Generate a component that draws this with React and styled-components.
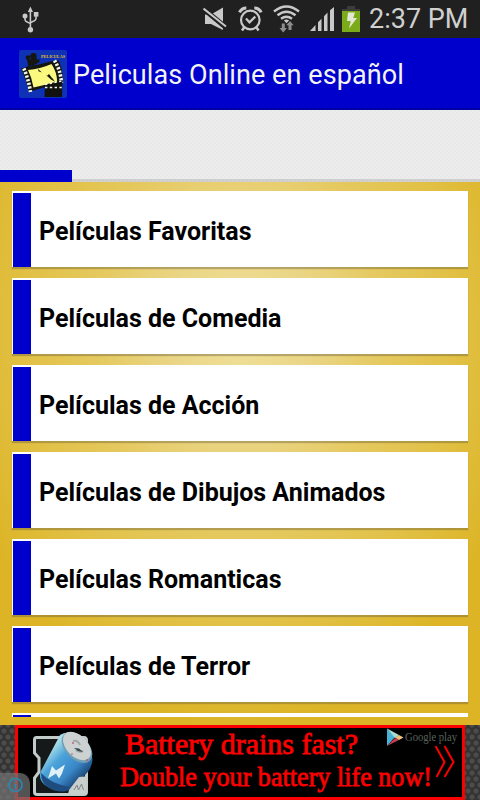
import React from "react";
import styled, { createGlobalStyle } from "styled-components";

const GlobalStyle = createGlobalStyle`
  * {
    box-sizing: border-box;
  }
  body {
    margin: 0;
    background: #000;
  }
`;

const Phone = styled.div`
  width: 480px;
  height: 800px;
  display: flex;
  flex-direction: column;
  overflow: hidden;
  font-family: Roboto, "Liberation Sans", sans-serif;
`;
const StatusBar = styled.div`
  flex: none;
  height: 38px;
  padding: 0 13px 0 22px;
  display: flex;
  align-items: center;
  justify-content: space-between;
  background: #202020;
`;
const StatusIcons = styled.div`
  display: flex;
  align-items: center;
`;
const StatusIcon = styled.svg`
  display: block;
  flex: none;
  margin-right: ${(props) => props.$gap || 0}px;
`;
const Clock = styled.span`
  width: 98px;
  font-size: 27px;
  line-height: 38px;
  color: #d0d0d0;
  white-space: nowrap;
`;
const ActionBar = styled.header`
  flex: none;
  height: 72px;
  padding-left: 19px;
  display: flex;
  align-items: center;
  background: #0000cc;
  border-bottom: 2px solid #0000a4;
`;
const AppIcon = styled.svg`
  display: block;
  flex: none;
  margin: 2px 6px 0 0;
  overflow: visible;
`;
const AppTitle = styled.h1`
  margin: 4px 0 0;
  font-size: 27px;
  font-weight: 400;
  letter-spacing: 0.08px;
  color: #f3f3f3;
  white-space: nowrap;
`;
const TabStrip = styled.div`
  flex: none;
  height: 72px;
  display: flex;
  align-items: flex-end;
  background: repeating-conic-gradient(#e8e8e8 0 25%, #ededed 0 50%) 0 0 / 4px
    4px;
`;
const TabIndicator = styled.div`
  width: 72px;
  height: 12px;
  background: #0000cc;
`;
const TabLine = styled.div`
  flex: 1;
  height: 3px;
  background: #cfcfcf;
`;
const List = styled.ul`
  flex: none;
  height: 543px;
  margin: 0;
  padding: 9px 12px 0;
  display: flex;
  flex-direction: column;
  gap: 11px;
  overflow: hidden;
  list-style: none;
  background: radial-gradient(
    ellipse 290px 400px at 240px 150px,
    #f0e09a 0%,
    #ead585 25%,
    #e5c95f 50%,
    #e1c044 75%,
    #dcb425 100%
  );
`;
const Card = styled.li`
  flex: none;
  height: ${(props) => (props.$last ? 4 : 76)}px;
  padding: 2px 0 0 1px;
  display: flex;
  overflow: hidden;
  background: #fff;
  box-shadow: ${(props) =>
    props.$last ? "none" : "0 2px 1px rgba(120, 105, 60, 0.45)"};
`;
const CardMark = styled.div`
  width: 18px;
  height: 74px;
  margin-right: 8px;
  background: #0000cc;
`;
const CardTitle = styled.span`
  font-size: 25px;
  font-weight: 700;
  line-height: 77px;
  color: #000;
  white-space: nowrap;
`;
const AdBar = styled.footer`
  position: relative;
  flex: none;
  height: 75px;
  padding: 0 15px 0 15px;
  background-color: #343434;
  background-image: radial-gradient(circle, #4c4c4c 2px, transparent 3px),
    radial-gradient(circle, #4c4c4c 2px, transparent 3px);
  background-size: 8px 12px;
  background-position: 0 0, 4px 6px;
`;
const Banner = styled.div`
  height: 75px;
  padding-left: 14px;
  display: flex;
  border: 3px solid #fb0000;
  background: #000;
`;
const AdCopy = styled.svg`
  display: block;
  flex: none;
  overflow: visible;
`;
const AdInfo = styled.div`
  position: absolute;
  left: 0;
  bottom: 0;
  width: 30px;
  height: 27px;
  border-top-right-radius: 10px;
  background: rgba(115, 115, 115, 0.72);
`;

const categories = [
  "Películas Favoritas",
  "Películas de Comedia",
  "Películas de Acción",
  "Películas de Dibujos Animados",
  "Películas Romanticas",
  "Películas de Terror",
];

const UsbIcon = () => (
  <StatusIcon width="17" height="27" viewBox="0 0 17 27">
    <g fill="none" stroke="#c9c9c9" strokeWidth="1.6">
      <path d="M8.4 5V24M3 9v4.5q0 1.5 2 2.4l3.4 1.7M14 8v4.5q0 1.5-2 2.4l-3.6 1.8" />
    </g>
    <g fill="#c9c9c9">
      <path d="M8.4 0.5 11 6H5.8z" />
      <circle cx="3" cy="10" r="2.5" />
      <path d="M11.8 6h4.6v4.6h-4.6z" />
      <circle cx="8.4" cy="23.8" r="2.7" />
    </g>
  </StatusIcon>
);

const MuteIcon = () => (
  <StatusIcon $gap={10} width="25" height="24" viewBox="0 0 25 24">
    <path d="M2 7.5h6l12-7V23L8 17H2z" fill="#c9c9c9" />
    <path d="M0 1.5 23 20.5" stroke="#202020" strokeWidth="5" />
    <path d="M.5 1.5 23 19.500" stroke="#c9c9c9" strokeWidth="2" />
  </StatusIcon>
);

const AlarmIcon = () => (
  <StatusIcon $gap={10} width="25" height="26" viewBox="0 0 25 26">
    <g fill="none" stroke="#c9c9c9">
      <circle cx="12.3" cy="14" r="9.3" strokeWidth="2.2" />
      <path
        d="M1.5 6.4Q3.7 2 8.3 2M16.3 2Q21 2 23.2 6.4"
        strokeWidth="3.2"
      />
      <path d="M8 12.5l3.5 3.8 5.8-5.7" strokeWidth="2.2" />
      <path d="M6.5 21 4 24.5M18 21l2.6 3.5" strokeWidth="2.5" />
    </g>
  </StatusIcon>
);

const WifiIcon = () => (
  <StatusIcon $gap={10} width="27" height="28" viewBox="0 0 27 28">
    <g fill="none" stroke="#c9c9c9" strokeWidth="2.4">
      <path d="M1 6.5Q13.5-3.5 26 6.5M4.5 10.3Q13.5 3.2 22.5 10.3M8 13.8Q13.5 9.6 19 13.8" />
    </g>
    <path d="M10.8 15.3q2.7-1.8 5.4 0l-2.7 3z" fill="#c9c9c9" />
    <path
      d="M8.8 18.5h3V23H14l-3.8 4.5L6.500 23h2.300zM15.500 25v-4.700h-2.200L17 16l3.600 4.300h-2.100V25z"
      fill="#8d8d8d"
    />
  </StatusIcon>
);

const SignalIcon = () => (
  <StatusIcon $gap={8} width="24" height="24" viewBox="0 0 24 24">
    <path
      d="M0 24 5.5 18v6zM8 15.2l3.5-3.5V24H8zM14 9.2l3.5-3.7V24H14zM20 3.3 24 0v24h-4z"
      fill="#c9c9c9"
    />
  </StatusIcon>
);

const BatteryIcon = () => (
  <StatusIcon $gap={9} width="18" height="26" viewBox="0 0 18 26">
    <path d="M5 0h8v3h5v2H0V3h5z" fill="#3c3c3c" />
    <path d="M0 5h18v21H0z" fill="#7cab19" />
    <path d="M6 6.5h7L11.2 12H15L7 22.5 8.8 15H5z" fill="#e2e8d5" />
  </StatusIcon>
);

const MovieIcon = () => (
  <AppIcon width="48" height="48" viewBox="0 0 48 48">
    <rect width="48" height="48" rx="2" fill="#0e31b5" />
    <g fill="#15160f">
      <circle cx="14.5" cy="6.2" r="3.2" />
      <circle cx="9" cy="7.6" r="2.3" />
      <path d="m8 9.5 10-1 .5 1.500 2-1.500v4.500l-2-.8-.5 2-9 1zM12 14h2.500l4.500 4.500h-2L13 15.500 6 19H4z" />
    </g>
    {/* film strip: dark edges with white perforations */}
    <path
      d="m2 18.500 7.500-1.500 24-6 6-.5q4 7 4.500 21L13 41l-3 1.500q-2-11-8-24z"
      fill="#14170f"
    />
    <path
      d="M9 20q12-1 23.5-6 5.5 8 5.800 18.500Q28 34 14.500 37.500 13 28 9 20z"
      fill="#fbf980"
    />
    <path
      d="M4.8 18.5Q9.5 29 11.5 42"
      fill="none"
      stroke="#f5f5ea"
      strokeWidth="3.6"
      strokeDasharray="2.2 1.6"
    />
    <path
      d="M35.5 10.5Q41.5 20 42.5 33"
      fill="none"
      stroke="#f5f5ea"
      strokeWidth="3.6"
      strokeDasharray="2.2 1.6"
    />
    <path
      d="m19 19 4 3.5-3.5-1.2zM27 25l6.5 3.2 2.5 3.5-4-2.2zM30 24l6 8-8-6z"
      fill="#15160f"
    />
    <path d="m26 34.500 17-4 .4 2.500-.4 14H25.500z" fill="#11120d" />
    <path
      d="m26 34.500 17-3.500M26 37.500h17"
      stroke="#f5f5ea"
      strokeWidth="1.5"
      strokeDasharray="2.4 2.4"
    />
    <text
      x="22"
      y="8"
      textLength="24"
      lengthAdjust="spacingAndGlyphs"
      fontFamily="Liberation Serif, serif"
      fontSize="4.6"
      fontWeight="700"
      fill="#e8c420"
    >
      PELICULAS
    </text>
  </AppIcon>
);

const BatteryAd = () => (
  <AdCopy width="430" height="69" viewBox="32 728 430 69">
    <defs>
      <linearGradient
        id="cell"
        gradientUnits="userSpaceOnUse"
        x1="48"
        y1="752"
        x2="78"
        y2="782"
      >
        <stop offset="0" stopColor="#a5dbe6" />
        <stop offset="0.3" stopColor="#4ba3da" />
        <stop offset="0.7" stopColor="#3a87c8" />
        <stop offset="1" stopColor="#1d4a7c" />
      </linearGradient>
    </defs>
    <path
      d="M36.5 737.5H84q2.5 0 2.5 3V792q0 2.5-2.5 2.5H37q-2.5 0-2.5-2.5v-14l4.500-6v-14l-4.500-5v-13q0-2.500 2-2.500z"
      fill="#15191a"
      stroke="#c3cbca"
      strokeWidth="3"
    />
    <path
      d="M60 735Q67 730 78 735T92.5 759Q92 768 86 774L69 790Q59 793 48 787T41 771z"
      fill="url(#cell)"
    />
    <path d="M41 773q10 11 29 14l-3 4q-10 2-18-3t-8-15z" fill="#1f4d80" />
    <ellipse
      cx="77"
      cy="747.5"
      rx="18.5"
      ry="11.5"
      transform="rotate(46 77 747.5)"
      fill="#6f9fb4"
    />
    <ellipse
      cx="77"
      cy="746"
      rx="17"
      ry="10.5"
      transform="rotate(46 77 746)"
      fill="#ccd2d1"
    />
    <path
      d="M73 741q5-1 7 4M76 750q3 3 7 1"
      fill="none"
      stroke="#a0a8a9"
      strokeWidth="2"
    />
    <path d="m74 748 5 .5 4 3.5-5-1z" fill="#37464a" />
    <g fill="#cc526b">
      <circle cx="73" cy="743" r="0.9" />
      <circle cx="87" cy="760" r="0.9" />
      <circle cx="72" cy="754" r="0.8" />
    </g>
    <path d="m52 766 4 4.500 9-6-3 9-3 5-3-5-8 5z" fill="#dff1f6" />
    <path d="m69 790 10-13 6-.5 1 2V794H68z" fill="#c9cfcd" />
    <path
      d="m74 790 3-5 1.500 5 3-6 2 6"
      stroke="#7d8988"
      strokeWidth="1"
      fill="none"
    />
    <g
      fill="#fb0000"
      stroke="#fb0000"
      strokeWidth="0.8"
      fontFamily="Liberation Serif, serif"
    >
      <text
        x="125"
        y="754"
        fontSize="28.5"
        textLength="233"
        lengthAdjust="spacingAndGlyphs"
      >
        Battery drains fast?
      </text>
      <text
        x="120"
        y="785.5"
        fontSize="27.5"
        textLength="312"
        lengthAdjust="spacingAndGlyphs"
      >
        Double your battery life now!
      </text>
    </g>
    <path d="m387 728.5 8 8.5-8 9z" fill="#48b1d8" />
    <path d="m387 728.5 12 6.5-4 3z" fill="#a9ddd2" />
    <path d="m387 746 8-8 4 2z" fill="#c63c50" />
    <path d="m395 737.5 4-2.5 4.500 2.500-4.500 2.500z" fill="#eec17f" />
    <text
      x="405"
      y="741"
      fontFamily="Liberation Serif, serif"
      fontSize="12"
      textLength="52"
      lengthAdjust="spacingAndGlyphs"
      fill="#59645a"
    >
      Google play
    </text>
    <path
      d="m435.5 746 9 16-8 15M444.5 746l9 16-9 15"
      fill="none"
      stroke="#fb0000"
      strokeWidth="2"
    />
  </AdCopy>
);

const App = () => {
  return (
    <>
      <GlobalStyle />
      <Phone>
        <StatusBar>
          <UsbIcon />
          <StatusIcons>
            <MuteIcon />
            <AlarmIcon />
            <WifiIcon />
            <SignalIcon />
            <BatteryIcon />
            <Clock>2:37 PM</Clock>
          </StatusIcons>
        </StatusBar>
        <ActionBar>
          <MovieIcon />
          <AppTitle>Peliculas Online en español</AppTitle>
        </ActionBar>
        <TabStrip>
          <TabIndicator />
          <TabLine />
        </TabStrip>
        <List>
          {categories.map((name) => (
            <Card key={name}>
              <CardMark />
              <CardTitle>{name}</CardTitle>
            </Card>
          ))}
          {/* next row, cut off by the ad */}
          <Card $last>
            <CardMark />
          </Card>
        </List>
        <AdBar>
          <Banner>
            <BatteryAd />
          </Banner>
          <AdInfo>
            <svg width="30" height="27" viewBox="0 0 30 27">
              <circle
                cx="15.5"
                cy="12"
                r="6.5"
                fill="none"
                stroke="#2888b0"
                strokeWidth="1.7"
              />
              <path d="M15.5 8v1.5M15.5 11v5" stroke="#2888b0" strokeWidth="2" />
            </svg>
          </AdInfo>
        </AdBar>
      </Phone>
    </>
  );
};

export default App;
